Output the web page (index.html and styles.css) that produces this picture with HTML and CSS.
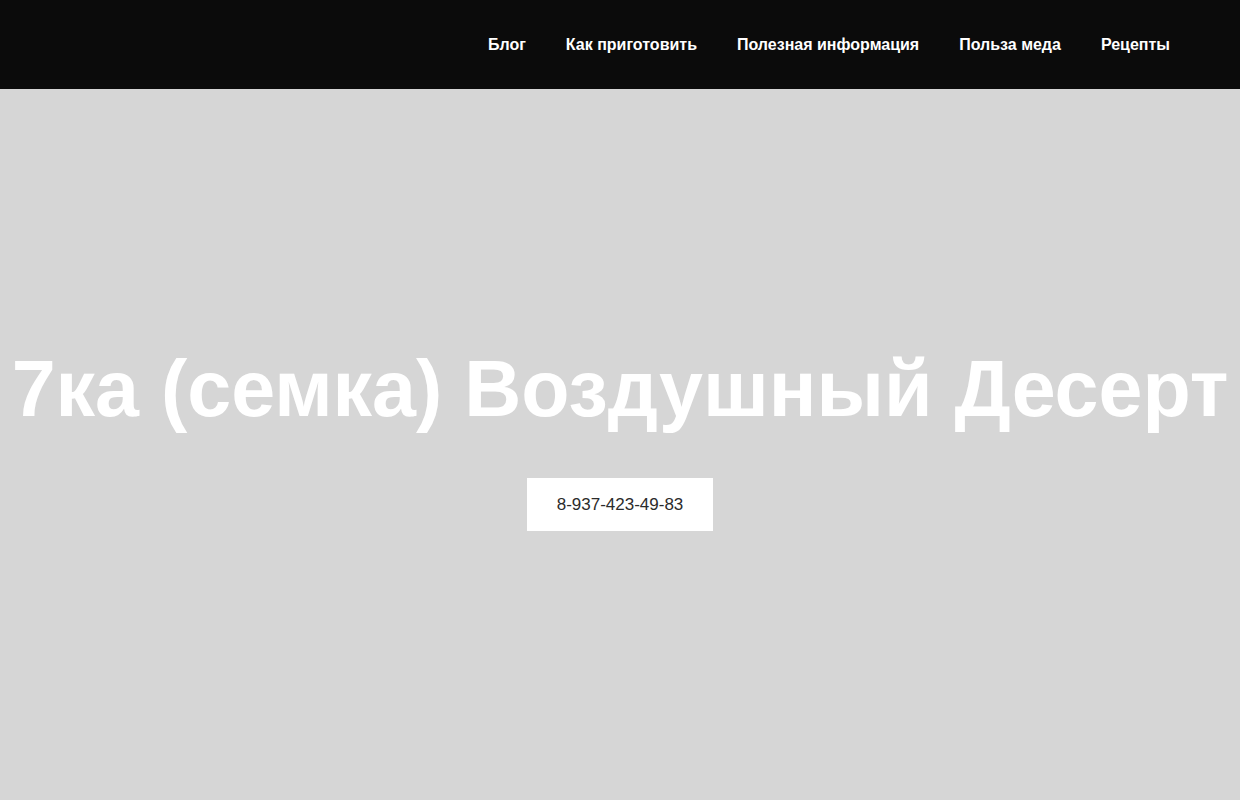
FILE: index.html
```html
<!DOCTYPE html>
<html lang="ru">
<head>
  <meta charset="utf-8">
  <title>7ка (семка) Воздушный Десерт</title>
  <link rel="stylesheet" href="styles.css">
</head>
<body>
  <header class="site-header">
    <nav class="main-nav">
      <a href="#">Блог</a>
      <a href="#">Как приготовить</a>
      <a href="#">Полезная информация</a>
      <a href="#">Польза меда</a>
      <a href="#">Рецепты</a>
    </nav>
  </header>
  <section class="hero">
    <h1>7ка (семка) Воздушный Десерт</h1>
    <a class="phone-button" href="#">8-937-423-49-83</a>
  </section>
</body>
</html>
```

FILE: styles.css
```css
body {
  margin: 0;
  font-family: "Liberation Sans", Arial, sans-serif;
  background-color: #d6d6d6;
}

.site-header {
  background-color: #0b0b0b;
  height: 89px;
  display: flex;
  justify-content: flex-end;
  align-items: center;
  padding-right: 70px;
}

.main-nav {
  display: flex;
  gap: 40px;
}

.main-nav a {
  color: #fff;
  text-decoration: none;
  font-weight: bold;
  font-size: 16px;
}

.hero {
  display: flex;
  flex-direction: column;
  align-items: center;
  padding: 254px 0 260px;
}

.hero h1 {
  margin: 0 0 43px;
  color: #fff;
  font-size: 79px;
  font-weight: bold;
  line-height: 92px;
  white-space: nowrap;
}

.phone-button {
  background-color: #fff;
  color: #2b2b2b;
  text-decoration: none;
  font-size: 17px;
  line-height: 19px;
  padding: 17px 30px;
}
```
